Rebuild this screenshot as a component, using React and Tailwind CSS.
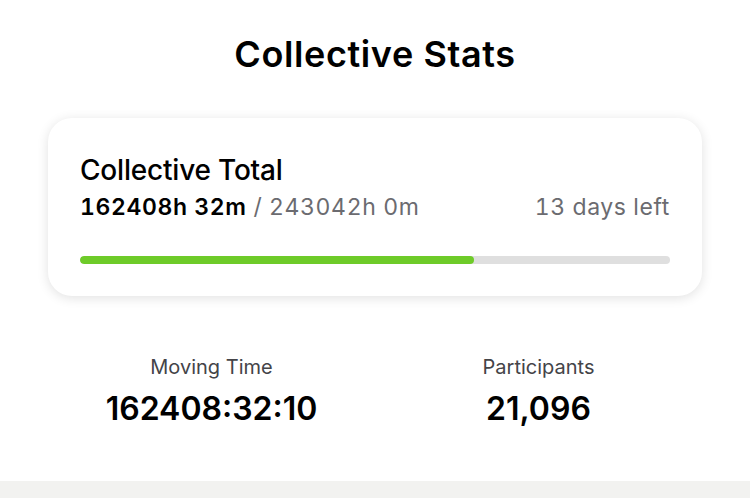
import React from 'react';

const total = 162408 + 32 / 60;
const goal = 243042;

export default function App() {
  const pct = (total / goal) * 100;
  return (
    <div className="flex min-h-[498px] w-full flex-col bg-white font-['Inter',sans-serif] text-black">
      <div className="px-12 pb-[52px] pt-8">
        <h1 className="text-center text-[36px] font-semibold leading-[44px] tracking-[0.6px]">
          Collective Stats
        </h1>
        <div className="mt-[42px] rounded-[24px] bg-white px-8 pb-[32px] pt-[36px] shadow-[0_2px_12px_rgba(0,0,0,0.12)]">
          <h2 className="text-[28px] font-medium leading-[32px] tracking-[-0.2px]">Collective Total</h2>
          <div className="mt-[7px] flex items-baseline justify-between text-[23px] leading-[28px] tracking-[0.6px] tabular-nums">
            <p>
              <span className="font-semibold">162408h 32m</span>
              <span className="text-[#6b6b70]"> / 243042h 0m</span>
            </p>
            <p className="text-[#6b6b70]">13 days left</p>
          </div>
          <div className="mt-[35px] h-2 w-full overflow-hidden rounded-full bg-[#dfdfdf]">
            <div className="h-full rounded-full bg-[#6ecb29]" style={{ width: `${pct}%` }} />
          </div>
        </div>
        <div className="mt-[57px] grid grid-cols-2 text-center">
          <div>
            <p className="text-[20px] leading-[28px] text-[#444448]">Moving Time</p>
            <p className="mt-[8px] text-[32px] font-semibold leading-[40px]">162408:32:10</p>
          </div>
          <div>
            <p className="text-[20px] leading-[28px] text-[#444448]">Participants</p>
            <p className="mt-[8px] text-[32px] font-semibold leading-[40px]">21,096</p>
          </div>
        </div>
      </div>
      <div className="flex-1 bg-[#f2f2f0]" />
    </div>
  );
}
